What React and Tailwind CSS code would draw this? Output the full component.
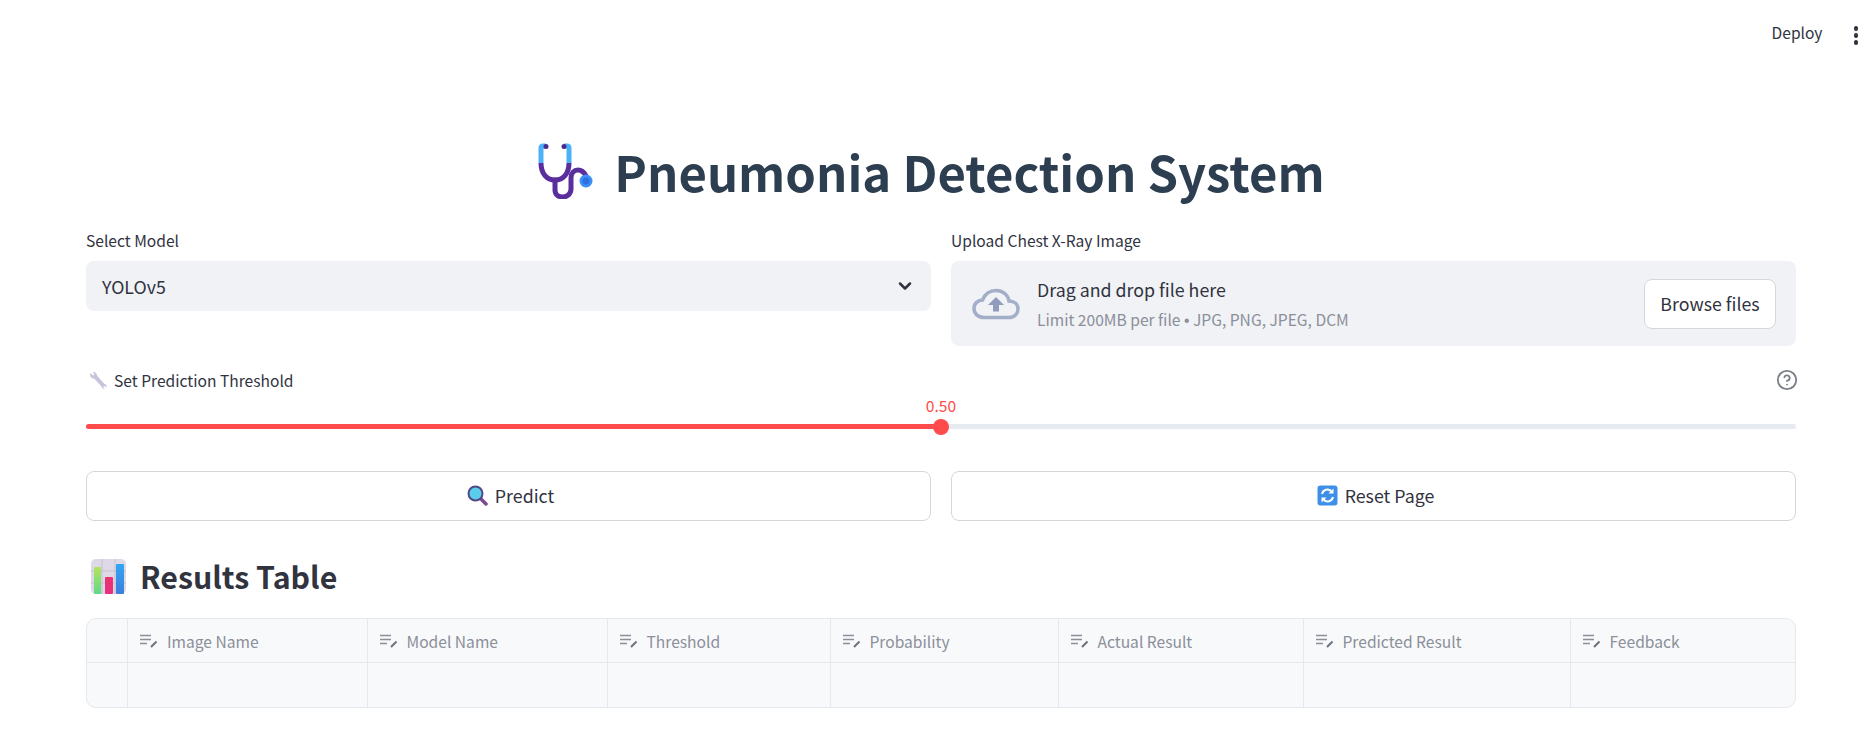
import { ChevronDown, CircleHelp } from "lucide-react";

const SANS = "font-['Noto_Sans_CJK_SC','Noto_Sans',sans-serif]";

const COLUMNS = [
  { label: "Image Name", width: "w-[239.5px]" },
  { label: "Model Name", width: "w-[240px]" },
  { label: "Threshold", width: "w-[223px]" },
  { label: "Probability", width: "w-[228px]" },
  { label: "Actual Result", width: "w-[245px]" },
  { label: "Predicted Result", width: "w-[267px]" },
  { label: "Feedback", width: "flex-1" },
];

function Stethoscope() {
  return (
    <svg width="58" height="56" viewBox="0 0 58 56" fill="none">
      <path d="M4 20c0 11 6 17 14 17s14-6 14-17" stroke="#5b2e9d" strokeWidth="5" />
      <path d="M18 37v10c0 5 4 7 8 7s8-3 8-8V35c0-5 3-8 7-8s6 2 8 6" stroke="#5b2e9d" strokeWidth="5" strokeLinecap="round" />
      <path d="M4 20V5c0-1.500 1-2 2-2h3M32 20V5c0-1.500-1-2-2-2h-3" stroke="#4db1f7" strokeWidth="5" />
      <circle cx="9" cy="3.500" r="2.500" fill="#4b2a8c" />
      <circle cx="27" cy="3.500" r="2.500" fill="#4b2a8c" />
      <circle cx="49" cy="38" r="6.500" fill="#3b8ff6" />
      <circle cx="49" cy="38" r="3.500" fill="#2f6fe0" />
    </svg>
  );
}

function CloudUpload() {
  return (
    <svg width="48" height="32" viewBox="0 0 48 32" fill="none" className="shrink-0">
      <path d="M12 29.500C6 29.500 2 25.500 2 20.500c0-5 4-8.500 8.500-8.500C13 6 18 2.500 24 2.500c7 0 12 4.500 13 10.500 5 0 9 3 9 8 0 4.500-3.500 8.500-9 8.500z" stroke="#a3aec8" strokeWidth="3.500" />
      <path d="M24 9l8 8h-5v6.500h-6V17h-5z" fill="#8f9cbc" />
    </svg>
  );
}

function Wrench() {
  return (
    <svg width="18" height="18" viewBox="0 0 18 18" fill="none">
      <path d="M1 2l3 2.500L5.500 3 3.500 1C6 .5 8 2 8 4.500L15.500 13c1.500 0 2.500 1.500 2 3.500L15.500 15 14 16.500l2 1.500c-2 .5-3.500-1-3.500-2.500L5 7.500C2.500 8 .5 5 1 2z" fill="#c9c4de" />
    </svg>
  );
}

function Magnifier() {
  return (
    <svg width="21" height="21" viewBox="0 0 21 21" fill="none">
      <path d="M13 13l6 6" stroke="#7c4a8e" strokeWidth="3.500" strokeLinecap="round" />
      <circle cx="8.500" cy="8.500" r="7" fill="#5accec" stroke="#4f4a86" strokeWidth="2" />
    </svg>
  );
}

function ResetIcon() {
  return (
    <svg width="21" height="21" viewBox="0 0 21 21" fill="none">
      <rect x=".5" y=".5" width="20" height="20" rx="3" fill="#3d8fe8" />
      <path d="M5 9a5.500 5.500 0 0 1 9.500-2.500M16 12a5.500 5.500 0 0 1-9.500 2.500" stroke="#fff" strokeWidth="2" />
      <path d="M16.500 3.500v5h-5zM4.500 17.500v-5h5z" fill="#fff" />
    </svg>
  );
}

function ChartIcon() {
  return (
    <svg width="35" height="35" viewBox="0 0 35 35" fill="none">
      <defs>
        <linearGradient id="barGreen" x1="0" y1="0" x2="0" y2="1">
          <stop offset="0" stopColor="#b5e35a" />
          <stop offset="1" stopColor="#5fd98a" />
        </linearGradient>
        <linearGradient id="barPink" x1="0" y1="0" x2="0" y2="1">
          <stop offset="0" stopColor="#e8336f" />
          <stop offset="1" stopColor="#e9307f" />
        </linearGradient>
        <linearGradient id="barBlue" x1="0" y1="0" x2="0" y2="1">
          <stop offset="0" stopColor="#33a6f2" />
          <stop offset="1" stopColor="#3a7fdc" />
        </linearGradient>
      </defs>
      <rect width="35" height="35" rx="5" fill="#ded9e6" />
      <path d="M0 12h35M0 24h35M11 0v35M24 0v35" stroke="#c5bfd0" strokeWidth="1" />
      <rect x="3" y="8" width="7" height="27" rx="1" fill="url(#barGreen)" />
      <rect x="14" y="18" width="8" height="17" rx="1" fill="url(#barPink)" />
      <rect x="25" y="5" width="8" height="30" rx="1" fill="url(#barBlue)" />
    </svg>
  );
}

function TextColumnIcon() {
  return (
    <svg width="18" height="14" viewBox="0 0 18 14" fill="none" className="shrink-0">
      <path d="M0 1.500h11M0 5.500h11M0 9.500h7" stroke="#8b8f99" strokeWidth="1.300" />
      <path d="M11 13l5.500-5.500" stroke="#6d717b" strokeWidth="2" />
    </svg>
  );
}

export default function App() {
  return (
    <div className={`${SANS} min-h-screen bg-white text-[#31333f]`}>
      {/* Toolbar */}
      <header className="flex h-[60px] items-start justify-end pr-[13px] pt-[21px]">
        <span className="text-[15.6px] leading-[22px]">Deploy</span>
        <div className="ml-[31px] mt-[5px] flex flex-col gap-[2.500px]">
          <span className="h-[4.500px] w-[4.500px] rounded-full bg-[#31333f]" />
          <span className="h-[4.500px] w-[4.500px] rounded-full bg-[#31333f]" />
          <span className="h-[4.500px] w-[4.500px] rounded-full bg-[#31333f]" />
        </div>
      </header>

      <main className="pl-[86px] pr-[75px]">
        {/* Title */}
        <h1 className="mt-[77px] flex h-[68px] items-center justify-center gap-[19px] pr-[20px] text-[49px] font-bold leading-[68px] tracking-normal text-[#2c3e50]">
          <Stethoscope />
          <span>Pneumonia Detection System</span>
        </h1>

        {/* Model + upload */}
        <div className="mt-[24px] grid grid-cols-2 gap-x-[20px]">
          <div>
            <label className="block text-[15.6px] leading-[22px]">Select Model</label>
            <div className="mt-[10px] flex h-[50px] items-center justify-between rounded-lg bg-[#f0f2f6] pb-[1px] pl-4 pr-[16px]">
              <span className="text-[17.8px] leading-6">YOLOv5</span>
              <ChevronDown size={20} strokeWidth={3} />
            </div>
          </div>
          <div>
            <label className="block text-[15.6px] leading-[22px]">Upload Chest X-Ray Image</label>
            <div className="mt-[10px] flex h-[85px] items-center rounded-lg bg-[#f0f2f6] pl-[21px] pr-[20px]">
              <CloudUpload />
              <div className="ml-[17px] flex-1">
                <div className="text-[17.8px] leading-6">Drag and drop file here</div>
                <div className="mt-[8px] text-[15.6px] leading-5 text-[#8b8f99]">
                  Limit 200MB per file <span className="font-['Liberation_Sans',sans-serif]">•</span> JPG, PNG, JPEG, DCM
                </div>
              </div>
              <button className="h-[50px] w-[132px] rounded-lg border border-[#d5d6da] bg-white pb-[1px] text-[17.8px]">Browse files</button>
            </div>
          </div>
        </div>

        {/* Threshold slider */}
        <div className="mt-[22px] flex h-[24px] items-center justify-between">
          <div className="flex items-center gap-[7px] pl-[3px] text-[15.6px] leading-[22px]">
            <Wrench />
            <span>Set Prediction Threshold</span>
          </div>
          <CircleHelp size={22} strokeWidth={2} className="-mr-[2px] text-[#7c7f88]" />
        </div>
        <div className="mt-[3px] h-[20px] text-center text-[15.6px] leading-5 text-[#ff4b4b]">0.50</div>
        <div className="relative mt-[9px] flex h-[5px] rounded bg-[#e6eaf1]">
          <div className="h-full w-1/2 rounded-l bg-[#ff4b4b]" />
          <div className="absolute left-1/2 top-1/2 h-[16px] w-[16px] -translate-x-1/2 -translate-y-1/2 rounded-full bg-[#ff4b4b]" />
        </div>

        {/* Actions */}
        <div className="mt-[42px] grid grid-cols-2 gap-x-[20px]">
          <button className="flex h-[50px] items-center justify-center gap-[7px] rounded-lg border border-[#d5d6da] bg-white pb-[2px] pl-[4px] text-[17.8px]">
            <Magnifier />
            <span>Predict</span>
          </button>
          <button className="flex h-[50px] items-center justify-center gap-[7px] rounded-lg border border-[#d5d6da] bg-white pb-[2px] pl-[4px] text-[17.8px]">
            <ResetIcon />
            <span>Reset Page</span>
          </button>
        </div>

        {/* Results */}
        <h2 className="mt-[33px] flex h-[44px] items-center gap-[14px] text-[30.3px] font-semibold leading-[44px] text-[#31333f]">
          <span className="pl-[5px]"><ChartIcon /></span>
          <span>Results Table</span>
        </h2>

        <div className="mt-[20px] overflow-hidden rounded-[10px] border border-[#e6e8ed] bg-[#f8f9fb]">
          <div className="flex h-[44px] border-b border-[#e6e8ed]">
            <div className="w-[41px] border-r border-[#e6e8ed]" />
            {COLUMNS.map((col, i) => (
              <div
                key={col.label}
                className={`${col.width} flex items-center gap-[8px] pl-[12px] text-[15.6px] leading-5 text-[#8b8f99] ${i < COLUMNS.length - 1 ? "border-r border-[#e6e8ed]" : ""}`}
              >
                <TextColumnIcon />
                <span className="ml-[1px]">{col.label}</span>
              </div>
            ))}
          </div>
          <div className="flex h-[44px]">
            <div className="w-[41px] border-r border-[#e6e8ed]" />
            {COLUMNS.map((col, i) => (
              <div
                key={col.label}
                className={`${col.width} ${i < COLUMNS.length - 1 ? "border-r border-[#e6e8ed]" : ""}`}
              />
            ))}
          </div>
        </div>
      </main>
    </div>
  );
}
